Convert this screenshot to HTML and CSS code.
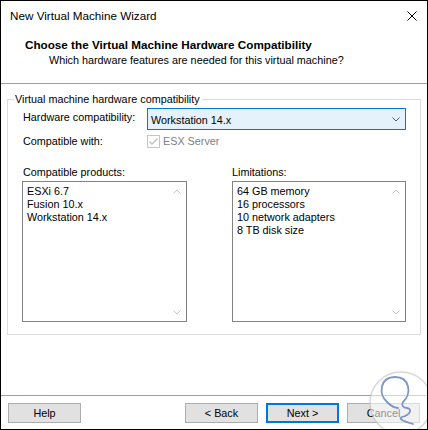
FILE: index.html
```html
<!DOCTYPE html>
<html>
<head>
<meta charset="utf-8">
<title>New Virtual Machine Wizard</title>
<link rel="stylesheet" href="styles.css">
</head>
<body>
<div class="window">
  <div class="titlebar">
    <span class="title">New Virtual Machine Wizard</span>
    <svg class="close" width="10" height="10" viewBox="0 0 10 10"><path d="M0.5 0.5L9.5 9.5M9.5 0.5L0.5 9.5" stroke="#000" stroke-width="1" fill="none"/></svg>
  </div>
  <div class="header">
    <div class="heading">Choose the Virtual Machine Hardware Compatibility</div>
    <div class="sub">Which hardware features are needed for this virtual machine?</div>
  </div>
  <div class="content">
    <fieldset class="group">
      <legend>Virtual machine hardware compatibility</legend>
      <div class="row row-hw">
        <span class="label">Hardware compatibility:</span>
        <div class="select">
          <span>Workstation 14.x</span>
          <svg class="chev" width="8" height="5" viewBox="0 0 8 5"><path d="M0.5 0.5L4 4L7.5 0.5" stroke="#555" stroke-width="1" fill="none"/></svg>
        </div>
      </div>
      <div class="row row-compat">
        <span class="label">Compatible with:</span>
        <span class="check"><svg width="11" height="11" viewBox="0 0 11 11"><path d="M1.5 5.5L4 8L9.5 2.5" stroke="#bdbdbd" stroke-width="1.3" fill="none"/></svg></span>
        <span class="disabled">ESX Server</span>
      </div>
      <div class="lists">
        <div class="col col-left">
          <div class="col-label">Compatible products:</div>
          <div class="listbox">
            <div class="items">
              <div>ESXi 6.7</div>
              <div>Fusion 10.x</div>
              <div>Workstation 14.x</div>
            </div>
            <div class="vscroll">
              <svg width="8" height="5" viewBox="0 0 8 5"><path d="M0.5 4.5L4 1L7.5 4.5" stroke="#c4c4c4" stroke-width="1" fill="none"/></svg>
              <svg width="8" height="5" viewBox="0 0 8 5"><path d="M0.5 0.5L4 4L7.5 0.5" stroke="#c4c4c4" stroke-width="1" fill="none"/></svg>
            </div>
          </div>
        </div>
        <div class="col col-right">
          <div class="col-label">Limitations:</div>
          <div class="listbox">
            <div class="items">
              <div>64 GB memory</div>
              <div>16 processors</div>
              <div>10 network adapters</div>
              <div>8 TB disk size</div>
            </div>
            <div class="vscroll">
              <svg width="8" height="5" viewBox="0 0 8 5"><path d="M0.5 4.5L4 1L7.5 4.5" stroke="#c4c4c4" stroke-width="1" fill="none"/></svg>
              <svg width="8" height="5" viewBox="0 0 8 5"><path d="M0.5 0.5L4 4L7.5 0.5" stroke="#c4c4c4" stroke-width="1" fill="none"/></svg>
            </div>
          </div>
        </div>
      </div>
    </fieldset>
  </div>
  <div class="footer">
    <button class="btn help">Help</button>
    <button class="btn">&lt; Back</button>
    <button class="btn next">Next &gt;</button>
    <button class="btn">Cancel</button>
  </div>
  <svg class="watermark" width="60" height="60" viewBox="0 0 60 60">
    <circle cx="33" cy="33" r="31" fill="rgba(255,255,255,0.55)" stroke="rgba(190,190,190,0.6)" stroke-width="1.5"/>
    <path d="M19 32 C10 24, 12 7, 27 7 C42 7, 44 24, 35 32 C33 35, 35 38, 39 38 C45 39, 42 45, 34 47 C29 49, 38 52, 45 54 M19 32 C23 36, 26 38, 30 38" stroke="#7b95c5" stroke-width="1.8" fill="none" stroke-linecap="round"/>
  </svg>
</div>
</body>
</html>
```

FILE: styles.css
```css
* { box-sizing: border-box; }
html, body { margin: 0; padding: 0; background: #fff; }
body {
  font-family: "Liberation Sans", Arial, sans-serif;
  font-size: 10.8px;
  color: #000;
}
.window {
  position: relative;
  width: 428px;
  height: 430px;
  border: 1px solid #000;
  display: flex;
  flex-direction: column;
  overflow: hidden;
  background: #fff;
}
.titlebar {
  height: 30px;
  flex: none;
  display: flex;
  align-items: center;
  justify-content: space-between;
  padding: 0 10px 0 9px;
  line-height: 16px;
  font-size: 11.7px;
}
.close { display: block; }
.header {
  flex: none;
  padding: 6px 0 15px 0;
  border-bottom: 1px solid #a0a0a0;
}
.heading {
  font-weight: bold;
  font-size: 11.7px;
  line-height: 15px;
  padding-left: 24px;
}
.sub { padding-left: 48px; line-height: 16px; }
.content {
  flex: 1;
  padding: 8px 6px 0 6px;
}
.group {
  margin: 0;
  min-width: 0;
  border: 1px solid #dcdcdc;
  padding: 0 14px 12px 15px;
}
.group legend {
  margin-left: -9px;
  padding: 0 2px 0 1px;
  line-height: 15px;
}
.row { display: flex; }
.label { width: 124px; flex: none; line-height: 16px; }
.row-hw { margin-top: 1px; height: 22px; }
.row-hw .label { padding-top: 1px; }
.select {
  flex: 1;
  height: 22px;
  border: 1px solid #0078d7;
  background: #e5f1fb;
  display: flex;
  align-items: center;
  justify-content: space-between;
  padding: 2px 5px 0 3px;
  line-height: 18px;
}
.chev { display: block; margin-top: -1px; }
.row-compat { margin-top: 3px; line-height: 16px; align-items: flex-start; }
.check {
  width: 13px;
  height: 13px;
  margin-top: 2px;
  margin-right: 3px;
  border: 1px solid #c4c4c4;
  display: flex;
}
.check svg { display: block; }
.disabled { color: #808080; }
.lists {
  display: grid;
  grid-template-columns: 165px 174px;
  column-gap: 45px;
  margin: 15px 0 0 -1px;
}
.col-label { line-height: 16px; }
.col-left .col-label { padding-left: 1px; }
.listbox {
  display: flex;
  height: 141px;
  margin-top: 1px;
  border: 1px solid #828282;
}
.items {
  flex: 1;
  padding: 3px 0 0 4px;
  line-height: 13px;
}
.vscroll {
  width: 18px;
  flex: none;
  display: flex;
  flex-direction: column;
  align-items: center;
  justify-content: space-between;
  padding: 7px 0 6px 0;
}
.vscroll svg { display: block; }
.footer {
  flex: none;
  height: 34px;
  border-top: 1px solid #a0a0a0;
  padding: 7px 7px 6px 7px;
  display: flex;
  gap: 8px;
}
.btn {
  width: 73px;
  height: 20px;
  margin: 0;
  padding: 0;
  background: #e1e1e1;
  border: 1px solid #adadad;
  font: inherit;
  color: #000;
  line-height: 18px;
  text-align: center;
}
.help { margin-right: auto; }
.next { border: 2px solid #0078d7; line-height: 16px; }
.watermark {
  position: absolute;
  left: 367px;
  top: 369px;
}
```
